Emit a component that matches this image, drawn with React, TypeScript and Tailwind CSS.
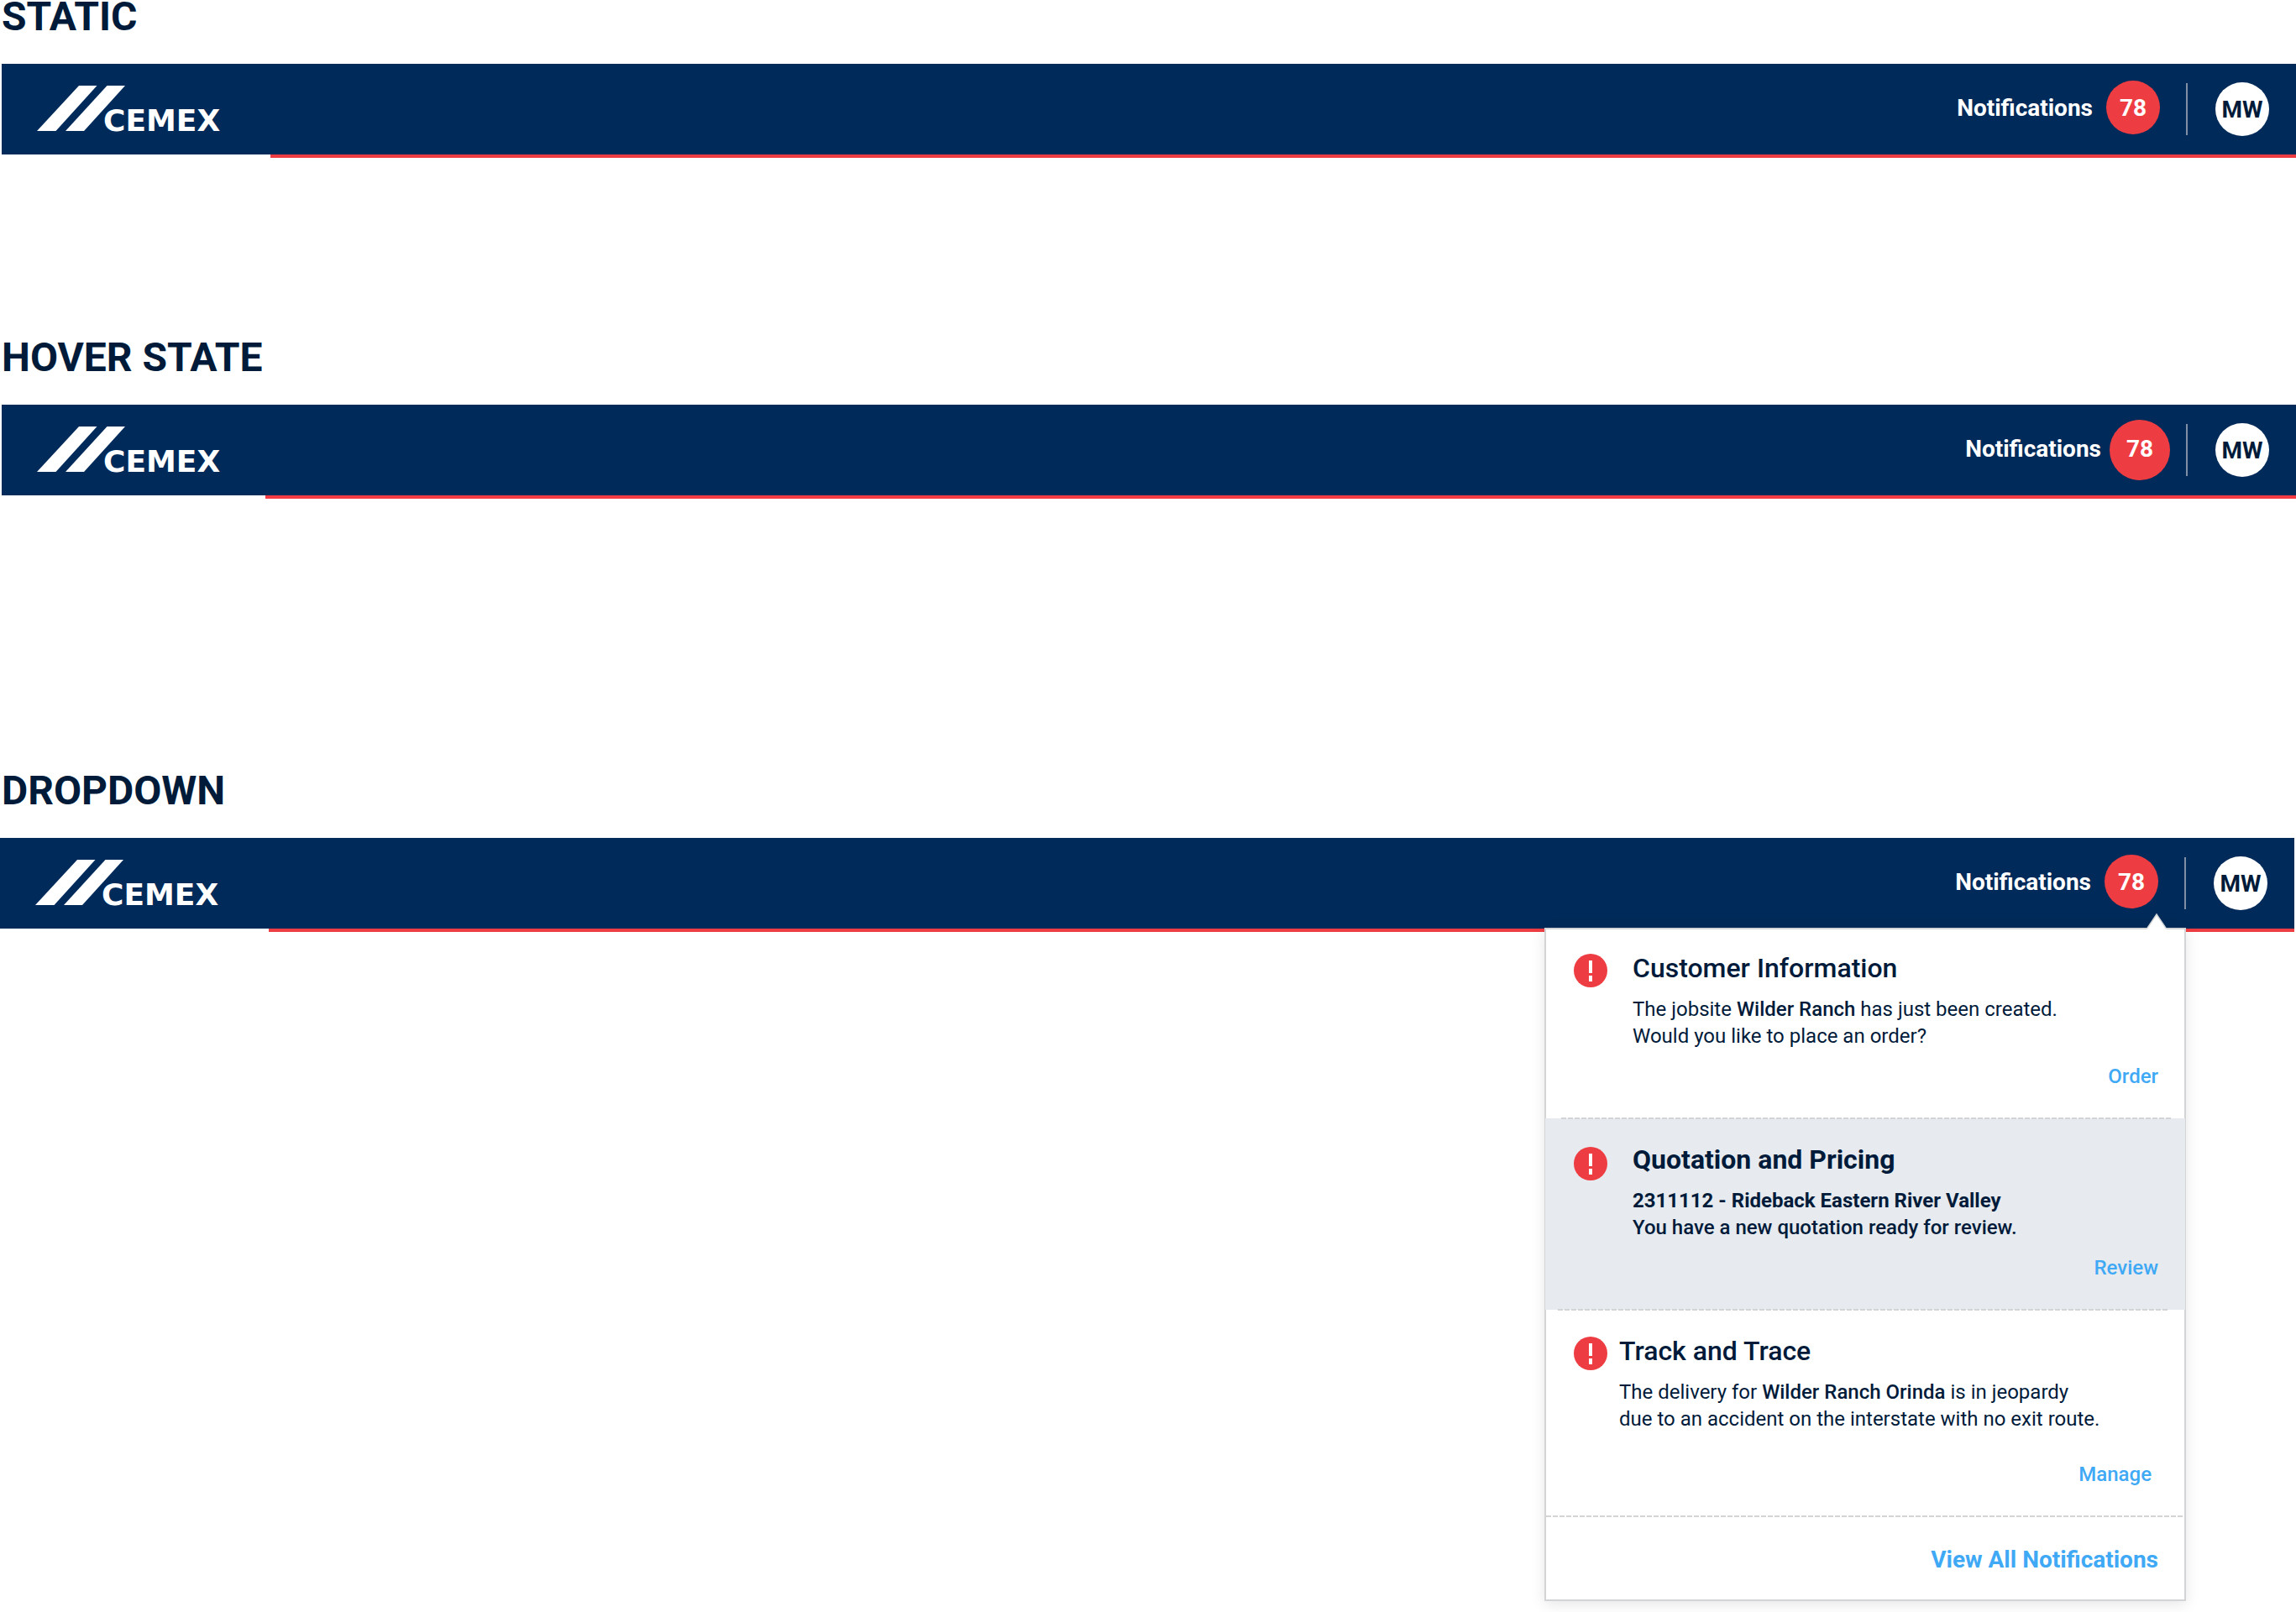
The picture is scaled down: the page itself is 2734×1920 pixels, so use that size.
import type { ReactNode } from "react";

function Logo() {
  return (
    <a href="#home" aria-label="CEMEX home" className="block">
      <svg width="228" height="56" viewBox="0 0 228 56" fill="#ffffff" aria-hidden="true" className="overflow-visible">
        <polygon points="50,0 71.5,0 22.5,54 0,54" />
        <polygon points="83.5,0 105,0 56,54 34,54" />
        <text x="79" y="54" fontSize="36" fontWeight="700" fontFamily='"DejaVu Sans", sans-serif'>
          CEMEX
        </text>
      </svg>
    </a>
  );
}

function AlertIcon({ className }: { className: string }) {
  return (
    <svg width="40" height="40" viewBox="0 0 40 40" aria-hidden="true" className={className}>
      <circle cx="20" cy="20" r="20" fill="#ee3d42" />
      <rect x="18" y="8" width="4" height="15" fill="#ffffff" />
      <rect x="18" y="26" width="4" height="7" fill="#ffffff" />
    </svg>
  );
}

type HeaderProps = {
  hovered?: boolean;
  lineClass: string;
  children?: ReactNode;
};

function Header({ hovered = false, lineClass, children }: HeaderProps) {
  return (
    <header className="relative">
      <div className="flex h-[108px] items-center justify-between bg-[#002a59] pl-[42px] pr-8">
        <Logo />
        <div className="flex items-center">
          <button
            type="button"
            className={
              hovered
                ? "mr-[19px] flex items-center gap-[10px] text-[28px] leading-8 font-bold text-white"
                : "mr-[31px] flex items-center gap-4 pb-1 text-[28px] leading-8 font-bold text-white"
            }
          >
            <span className={hovered ? "pb-[2px]" : "pt-[2px]"}>Notifications</span>
            <span
              className={
                hovered
                  ? "flex size-[72px] items-center justify-center rounded-full bg-[#ee3d42] pb-[2px]"
                  : "flex size-16 items-center justify-center rounded-full bg-[#ee3d42] pt-[2px]"
              }
            >
              78
            </span>
          </button>
          <div className="mr-[33px] h-[62px] w-[2px] bg-[#7f90a6]" />
          <button
            type="button"
            aria-label="Account MW"
            className="flex size-16 items-center justify-center rounded-full bg-white pt-[2px] text-[28px] leading-8 font-bold text-[#001b3a]"
          >
            MW
          </button>
        </div>
      </div>
      <div className={lineClass} />
      {children}
    </header>
  );
}

const dashes = "bg-[repeating-linear-gradient(90deg,#d3d4d6_0_6px,transparent_6px_8px)]";

function Dropdown() {
  return (
    <div className="absolute top-[107px] right-[129px] w-[764px] border-2 border-[#d3d4d6] bg-white text-2xl leading-8 text-[#001b3a] shadow-[0_4px_16px_rgba(0,0,0,0.1)]">
      <svg
        width="24"
        height="20"
        viewBox="0 0 24 20"
        aria-hidden="true"
        className="absolute -top-[19px] right-[21px]"
      >
        <path d="M0.5 18 L12 1 L23.5 18 V20 H0.5 Z" fill="#ffffff" />
        <path d="M0.5 18 L12 1 L23.5 18" fill="none" stroke="#d3d4d6" strokeWidth="1.5" />
      </svg>

      <article className="flex gap-[30px] pt-[26px] pr-[31px] pb-[34px] pl-[33px]">
        <AlertIcon className="mt-[3px] shrink-0" />
        <div className="flex grow flex-col">
          <h2 className="text-[32px] leading-10 font-medium">Customer Information</h2>
          <p className="mt-[13px]">
            The jobsite <strong className="font-medium">Wilder Ranch</strong> has just been created.
            <br />
            Would you like to place an order?
          </p>
          <a href="#order" className="mt-4 self-end font-medium text-[#3fa9f5]">
            Order
          </a>
        </div>
      </article>

      <div className={`relative z-10 -my-px mr-4 ml-[18px] h-[2px] ${dashes}`} />

      <article className="-mx-px flex gap-[30px] bg-[#e7eaef] pt-[29px] pr-8 pb-[34px] pl-[34px]">
        <AlertIcon className="mt-[5px] shrink-0" />
        <div className="flex grow flex-col">
          <h2 className="text-[32px] leading-10 font-bold">Quotation and Pricing</h2>
          <p className="mt-[13px] font-medium">
            <strong className="font-bold">2311112 - Rideback Eastern River Valley</strong>
            <br />
            You have a new quotation ready for review.
          </p>
          <a href="#review" className="mt-4 self-end font-medium text-[#3fa9f5]">
            Review
          </a>
        </div>
      </article>

      <div className={`relative z-10 -my-px mr-5 ml-[14px] h-[2px] ${dashes}`} />

      <article className="flex gap-[14px] pt-[29px] pr-[31px] pb-[34px] pl-[33px]">
        <AlertIcon className="mt-[3px] shrink-0" />
        <div className="flex grow flex-col">
          <h2 className="text-[32px] leading-10 font-medium">Track and Trace</h2>
          <p className="mt-[13px]">
            The delivery for <strong className="font-medium">Wilder Ranch Orinda</strong> is in jeopardy
            <br />
            due to an accident on the interstate with no exit route.
          </p>
          <a href="#manage" className="mt-[34px] mr-2 self-end font-medium text-[#3fa9f5]">
            Manage
          </a>
        </div>
      </article>

      <div className={`relative z-10 -my-px h-[2px] ${dashes}`} />

      <div className="flex justify-end pt-9 pr-[31px] pb-[31px]">
        <a href="#all" className="text-[28px] font-bold text-[#3fa9f5]">
          View All Notifications
        </a>
      </div>
    </div>
  );
}

function Title({ children }: { children: ReactNode }) {
  return <h1 className="mb-9 pl-[2px] text-5xl leading-10 font-bold text-[#001b3a]">{children}</h1>;
}

export default function App() {
  return (
    <main className="min-h-screen bg-white font-['Roboto',sans-serif]">
      <section>
        <Title>STATIC</Title>
        <div className="ml-[2px]">
          <Header lineClass="ml-80 h-1 bg-[#ee3d42]" />
        </div>
      </section>
      <section className="mt-[218px]">
        <Title>HOVER STATE</Title>
        <div className="ml-[2px]">
          <Header hovered lineClass="ml-[314px] h-1 bg-[#f43b43]" />
        </div>
      </section>
      <section className="mt-[328px]">
        <Title>DROPDOWN</Title>
        <div className="mr-[2px]">
          <Header lineClass="ml-80 h-1 bg-[#ee3d42]">
            <Dropdown />
          </Header>
        </div>
      </section>
    </main>
  );
}
